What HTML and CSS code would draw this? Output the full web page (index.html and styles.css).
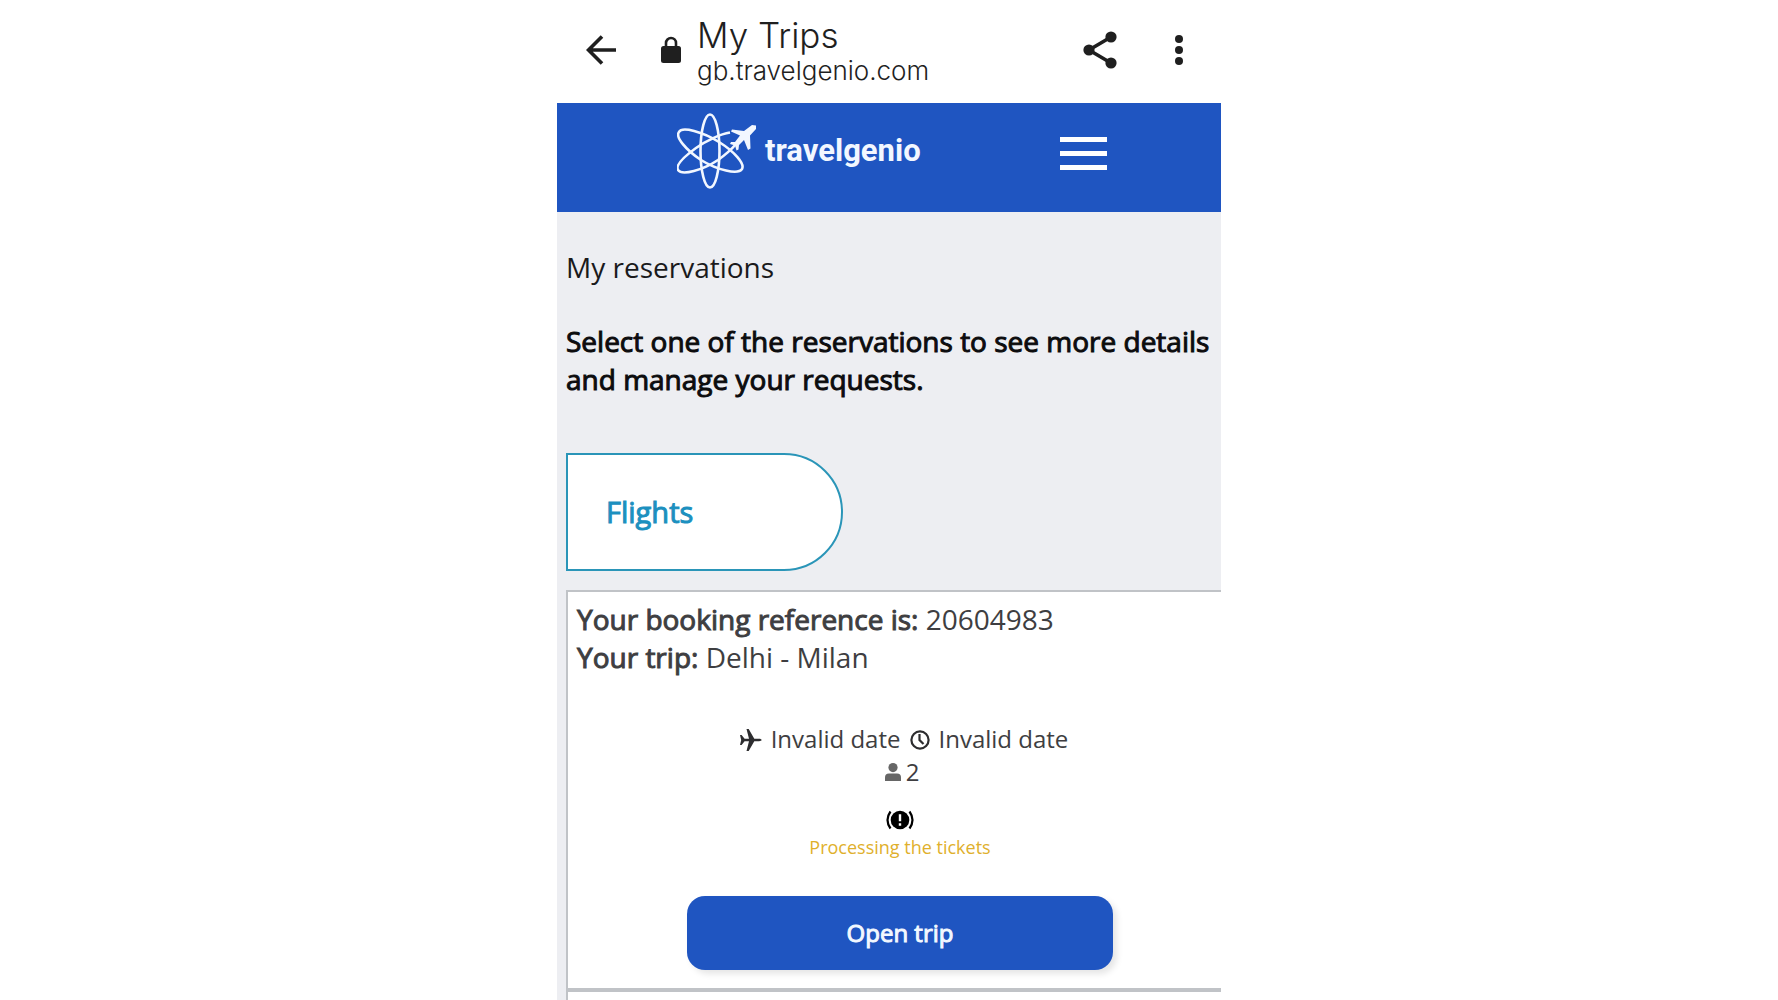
FILE: index.html
```html
<!DOCTYPE html>
<html lang="en">

<head>
    <meta charset="UTF-8">
    <meta name="viewport" content="width=device-width, initial-scale=1.0">
    <title>My Trips</title>
    <link rel="stylesheet" href="styles.css">
</head>

<body>
    <div class="phone">
        <!-- browser bar -->
        <div class="browser_bar">
            <button class="icon_btn" aria-label="Back">
                <svg width="30" height="30" viewBox="0 0 30 30" fill="none" stroke="#1f1f1f" stroke-width="3.6">
                    <path d="M30 15H2.500M16 1.500L2.500 15L16 28.500" />
                </svg>
            </button>
            <svg class="lock" width="20" height="28" viewBox="0 0 20 28">
                <rect y="10" width="20" height="17" rx="2.5" fill="#1f1f1f" />
                <path d="M5 11V7a5 5 0 0 1 10 0v4" fill="none" stroke="#1f1f1f" stroke-width="2.6" />
            </svg>
            <div class="page_info">
                <p class="page_title">My Trips</p>
                <p class="page_url">gb.travelgenio.com</p>
            </div>
            <button class="icon_btn" aria-label="Share">
                <svg width="34" height="38" viewBox="0 0 34 38" fill="#1f1f1f">
                    <path d="M28 6L6 19l22 13" fill="none" stroke="#1f1f1f" stroke-width="3.6" />
                    <circle cx="28" cy="6" r="5.6" />
                    <circle cx="6" cy="19" r="5.6" />
                    <circle cx="28" cy="32" r="5.6" />
                </svg>
            </button>
            <button class="icon_btn more" aria-label="More options">
                <svg width="8" height="30" viewBox="0 0 8 30" fill="#1f1f1f">
                    <circle cx="4" cy="4" r="4" />
                    <circle cx="4" cy="15" r="4" />
                    <circle cx="4" cy="26" r="4" />
                </svg>
            </button>
        </div>

        <!-- site header -->
        <header class="site_header">
            <a href="#" class="logo">
                <svg width="80" height="76" viewBox="0 0 80 76" fill="none" stroke="#f2f7ff" stroke-width="2.6">
                    <ellipse cx="33" cy="38" rx="9.5" ry="36.5" />
                    <path d="M53 19.500C44 21 30 27 19 35C8 43 -2 52 1 57C5 63 26 57 41 47C48 42 54 37 59 31" />
                    <path d="M2 19C5 13 26 19 42 29C58 39 68 51 65 56C61 62 40 57 24 47C9 37 -2 24 2 19Z" />
                    <path d="M79 12.500L75 12L67 18L55 16.500L54 18.500L63 22.500L58 29L54 29L53 31L58 32.500L59.500 37.500L61.500 36.500L62 32L67 27L71 37L73.500 35.500L73 22.500L79 16Z" fill="#f2f7ff" stroke="none" />
                </svg>
                <span class="logo_name">travelgenio</span>
            </a>
            <button class="menu_btn" aria-label="Menu">
                <span></span>
                <span></span>
                <span></span>
            </button>
        </header>

        <!-- reservations -->
        <main class="content">
            <h1 class="heading">My reservations</h1>
            <p class="intro">Select one of the reservations to see more details and manage your requests.</p>

            <button class="tab">Flights</button>

            <section class="card">
                <p><b>Your booking reference is:</b> 20604983</p>
                <p><b>Your trip:</b> Delhi - Milan</p>

                <div class="details">
                    <div class="dates">
                        <svg width="22" height="22" viewBox="0 0 22 22" fill="#2d2d2f">
                            <path d="M0 6h1.600l3 3.800H9L6.500 0h2.200l5.600 9.800H19c1.600 0 2.600.6 2.600 1.200s-1 1.200-2.600 1.200h-4.700L8.700 22H6.500L9 12.200H4.600l-3 3.800H0l1.200-5z" />
                        </svg>
                        <span>Invalid date</span>
                        <svg width="20" height="20" viewBox="0 0 20 20" fill="none" stroke="#2d2d2f" stroke-width="2.200">
                            <circle cx="10" cy="10" r="8.600" />
                            <path d="M9.500 4v6l4 4" />
                        </svg>
                        <span>Invalid date</span>
                    </div>
                    <div class="people">
                        <svg width="16" height="18" viewBox="0 0 16 18" fill="#666">
                            <circle cx="8" cy="4.600" r="4.600" />
                            <path d="M0 18v-3.500Q0 10.500 4 10.500h8q4 0 4 4V18z" />
                        </svg>
                        <span>2</span>
                    </div>
                </div>

                <div class="status">
                    <svg width="28" height="20" viewBox="0 0 28 20">
                        <circle cx="14" cy="10" r="9.300" fill="#000" />
                        <path d="M4.500 1.500Q-1.500 10 4.500 18.500M23.500 1.500Q29.500 10 23.500 18.500" fill="none" stroke="#000" stroke-width="2.200" />
                        <path d="M14 4.200v7M14 13.300v2.500" stroke="#fff" stroke-width="2.400" />
                    </svg>
                    <p>Processing the tickets</p>
                </div>

                <button class="open_btn">Open trip</button>
            </section>

            <section class="card next"></section>
        </main>
    </div>
</body>

</html>
```
FILE: styles.css
```css
* {
    margin: 0;
    padding: 0;
    box-sizing: border-box;
}

body {
    background: #fff;
    font-family: "Open Sans", sans-serif;
    font-size: 28px;
    line-height: 38px;
    color: #3e3e41;
}

button {
    border: none;
    background: none;
    font-family: inherit;
    cursor: pointer;
}

svg {
    display: block;
    flex-shrink: 0;
}

.phone {
    max-width: 664px;
    min-height: 100vh;
    margin: 0 auto;
    display: flex;
    flex-direction: column;
    overflow: hidden;
}

/* browser bar */
.browser_bar {
    display: flex;
    align-items: center;
    padding: 14px 38px 18px 29px;
    color: #1f1f1f;
}

.browser_bar .lock {
    margin-left: 45px;
}

.page_info {
    flex: 1;
    margin-left: 16px;
    font-family: Inter, "Liberation Sans", sans-serif;
    font-weight: 300;
}

.page_title {
    font-size: 35px;
    line-height: 42px;
}

.page_url {
    font-size: 26px;
    line-height: 29px;
}

.browser_bar .more {
    margin-left: 58px;
}

/* site header */
.site_header {
    display: flex;
    justify-content: space-between;
    align-items: flex-start;
    padding: 10px 114px 23px 120px;
    background: #1f55c1;
}

.logo {
    display: flex;
    align-items: center;
    gap: 8px;
    color: #f2f7ff;
    text-decoration: none;
}

.logo_name {
    font-family: Roboto, sans-serif;
    font-size: 31px;
    font-weight: 700;
}

.menu_btn {
    width: 47px;
    margin-top: 24px;
    display: flex;
    flex-direction: column;
    gap: 9px;
}

.menu_btn span {
    width: 100%;
    height: 5px;
    background: #fff;
}

/* reservations */
.content {
    flex: 1;
    display: flex;
    flex-direction: column;
    padding: 36px 9px 0;
    background: #edeef2;
}

.heading {
    font-size: 28px;
    font-weight: 400;
    color: #1a1a1c;
}

.intro {
    margin-top: 36px;
    color: #0c0c0e;
    -webkit-text-stroke: 1px;
}

.tab {
    align-self: flex-start;
    width: 277px;
    margin: 55px 0 19px;
    padding: 38px;
    border: 2px solid #2a95b8;
    border-radius: 0 59px 59px 0;
    background: #fff;
    color: #1c90bf;
    font-size: 29px;
    line-height: 38px;
    text-align: left;
    -webkit-text-stroke: 1px;
}

/* the cards run past the right edge of the screen */
.card {
    margin-right: -22px;
    padding: 8px 9px 18px;
    border: 2px solid #c0c3c7;
    background: #fff;
}

.card b {
    font-weight: 400;
    -webkit-text-stroke: 1px;
}

.details {
    margin-top: 46px;
    font-size: 24px;
    line-height: 33px;
}

.dates,
.people {
    display: flex;
    justify-content: center;
    align-items: center;
}

.dates {
    gap: 9px;
    padding-left: 8px;
}

.dates svg {
    margin-top: 3px;
}

.people {
    gap: 5px;
    padding-left: 4px;
}

.status {
    display: flex;
    flex-direction: column;
    align-items: center;
    gap: 5px;
    margin-top: 22px;
    color: #dfb02c;
    font-size: 18px;
    line-height: 25px;
}

.open_btn {
    display: block;
    width: 66%;
    margin: 36px auto 0;
    padding: 18px;
    border-radius: 18px;
    background: #1f55c1;
    box-shadow: 4px 4px 6px rgba(0, 0, 0, 0.1);
    color: #f2f8ff;
    font-size: 24px;
    line-height: 38px;
    -webkit-text-stroke: 1px;
}

.card.next {
    flex: 1;
    padding: 0;
    border-bottom: none;
}
```
